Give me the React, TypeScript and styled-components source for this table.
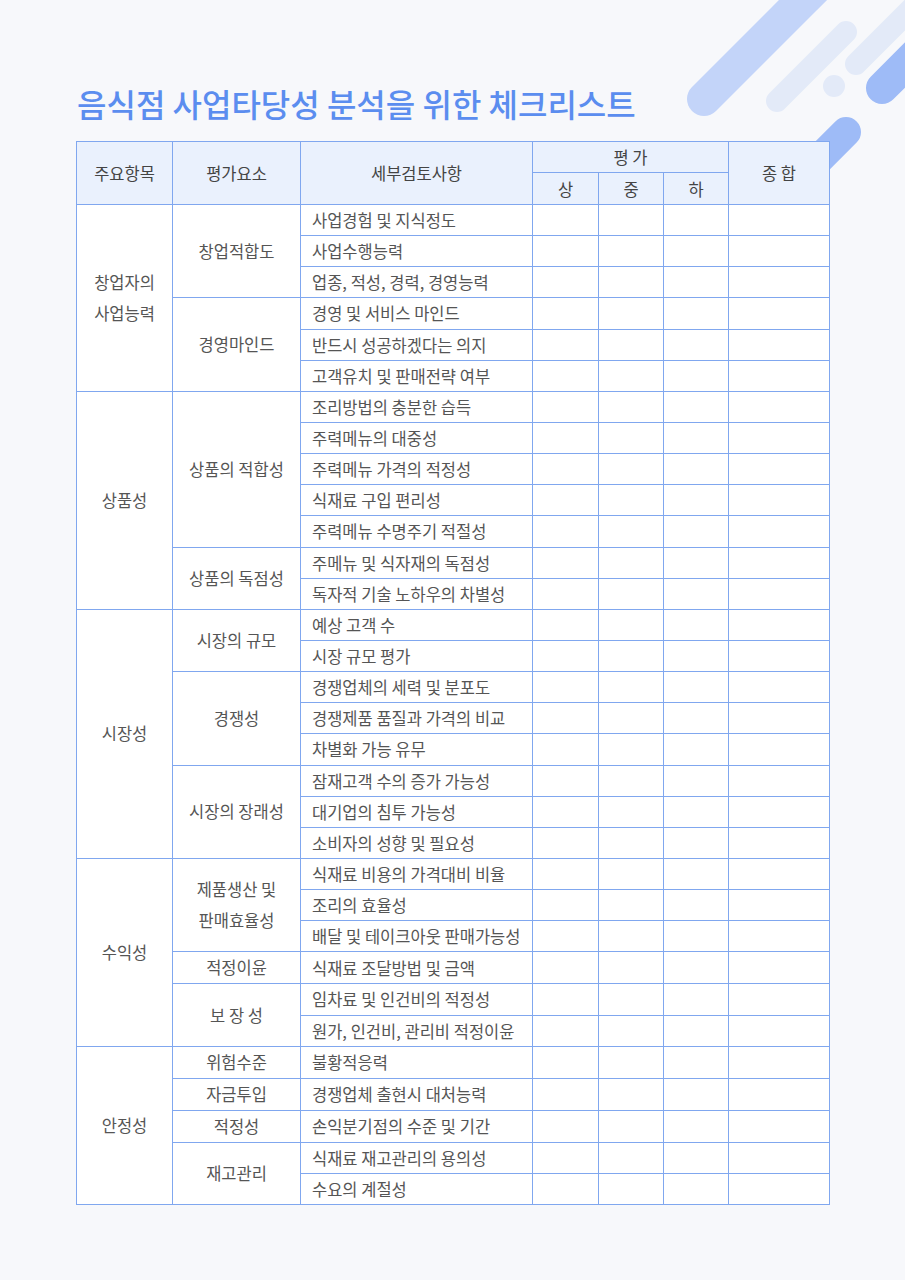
import { FC, Fragment, ReactElement } from "react";
import styled, { createGlobalStyle } from "styled-components";

interface SubGroup {
    label: string[];
    items: string[];
}
interface Group {
    title: string[];
    subs: SubGroup[];
}

const groups: Group[] = [
    {
        title: ["창업자의", "사업능력"],
        subs: [
            { label: ["창업적합도"], items: ["사업경험 및 지식정도", "사업수행능력", "업종, 적성, 경력, 경영능력"] },
            { label: ["경영마인드"], items: ["경영 및 서비스 마인드", "반드시 성공하겠다는 의지", "고객유치 및 판매전략 여부"] },
        ],
    },
    {
        title: ["상품성"],
        subs: [
            {
                label: ["상품의 적합성"],
                items: ["조리방법의 충분한 습득", "주력메뉴의 대중성", "주력메뉴 가격의 적정성", "식재료 구입 편리성", "주력메뉴 수명주기 적절성"],
            },
            { label: ["상품의 독점성"], items: ["주메뉴 및 식자재의 독점성", "독자적 기술 노하우의 차별성"] },
        ],
    },
    {
        title: ["시장성"],
        subs: [
            { label: ["시장의 규모"], items: ["예상 고객 수", "시장 규모 평가"] },
            { label: ["경쟁성"], items: ["경쟁업체의 세력 및 분포도", "경쟁제품 품질과 가격의 비교", "차별화 가능 유무"] },
            { label: ["시장의 장래성"], items: ["잠재고객 수의 증가 가능성", "대기업의 침투 가능성", "소비자의 성향 및 필요성"] },
        ],
    },
    {
        title: ["수익성"],
        subs: [
            {
                label: ["제품생산 및", "판매효율성"],
                items: ["식재료 비용의 가격대비 비율", "조리의 효율성", "배달 및 테이크아웃 판매가능성"],
            },
            { label: ["적정이윤"], items: ["식재료 조달방법 및 금액"] },
            { label: ["보 장 성"], items: ["임차료 및 인건비의 적정성", "원가, 인건비, 관리비 적정이윤"] },
        ],
    },
    {
        title: ["안정성"],
        subs: [
            { label: ["위험수준"], items: ["불황적응력"] },
            { label: ["자금투입"], items: ["경쟁업체 출현시 대처능력"] },
            { label: ["적정성"], items: ["손익분기점의 수준 및 기간"] },
            { label: ["재고관리"], items: ["식재료 재고관리의 용의성", "수요의 계절성"] },
        ],
    },
];

// column widths of the checklist table, left to right
const columns = [96, 128, 232, 66, 65, 65, 101];

const GlobalStyle = createGlobalStyle`
    body {
        margin: 0;
        background: #f7f8fb;
        font-family: "Noto Sans CJK KR", "Noto Sans", sans-serif;
    }
`;

const Page = styled.main`
    position: relative;
    width: 905px;
    height: 1280px;
    overflow: hidden;
    padding: 81px 76px 0;
    box-sizing: border-box;
`;

const Deco = styled.svg`
    position: absolute;
    top: 0;
    left: 640px;
`;

const Title = styled.h1`
    margin: 0 0 16px 1px;
    font-size: 32px;
    line-height: 44px;
    font-weight: 500;
    color: #5b8def;
    letter-spacing: 0;
`;

const Table = styled.table`
    position: relative;
    z-index: 1;
    width: 753px;
    border-collapse: collapse;
    table-layout: fixed;
    background: #fff;
    font-size: 16.5px;
    color: #555;
`;

const Head = styled.th<{ $h: number }>`
    height: ${(p) => p.$h}px;
    padding: 0;
    border: 1px solid #80a7ef;
    background: #eaf1fd;
    font-weight: 400;
    color: #444;
    text-align: center;
    vertical-align: middle;
    line-height: 20px;
`;

const Row = styled.tr`
    height: 31.15px;
`;

const GroupCell = styled.td`
    padding: 0;
    border: 1px solid #80a7ef;
    text-align: center;
    vertical-align: middle;
    line-height: 31px;
`;

const ItemCell = styled.td`
    padding: 0 0 0 11px;
    border: 1px solid #80a7ef;
    white-space: nowrap;
    line-height: 20px;
`;

const ScoreCell = styled.td`
    padding: 0;
    border: 1px solid #80a7ef;
`;

const Decoration: FC = (): ReactElement => (
    <Deco width="265" height="170" viewBox="640 0 265 170">
        <g strokeLinecap="round" fill="none">
            <line x1="704" y1="99" x2="860" y2="-57" stroke="#c3d4f9" strokeWidth="34" />
            <line x1="777" y1="101" x2="846" y2="32" stroke="#e3eaf8" strokeWidth="22" />
            <line x1="856" y1="64" x2="940" y2="-20" stroke="#e3eaf8" strokeWidth="22" />
            <line x1="882" y1="88" x2="960" y2="10" stroke="#9ebbf7" strokeWidth="32" />
            <line x1="846" y1="132" x2="790" y2="188" stroke="#9ebbf7" strokeWidth="30" />
        </g>
        <circle cx="834" cy="86" r="11" fill="#e3eaf8" />
    </Deco>
);

const Lines: FC<{ text: string[] }> = ({ text }): ReactElement => (
    <>
        {text.map((t, i) => (
            <Fragment key={t}>
                {i > 0 && <br />}
                {t}
            </Fragment>
        ))}
    </>
);

const App: FC = (): ReactElement => {
    return (
        <Page>
            <GlobalStyle />
            <Decoration />
            <Title>음식점 사업타당성 분석을 위한 체크리스트</Title>
            <Table>
                <colgroup>
                    {columns.map((w, i) => (
                        <col key={i} style={{ width: w }} />
                    ))}
                </colgroup>
                <thead>
                    <tr>
                        <Head $h={30} rowSpan={2}>주요항목</Head>
                        <Head $h={30} rowSpan={2}>평가요소</Head>
                        <Head $h={30} rowSpan={2}>세부검토사항</Head>
                        <Head $h={30} colSpan={3}>평 가</Head>
                        <Head $h={30} rowSpan={2}>종 합</Head>
                    </tr>
                    <tr>
                        <Head $h={31}>상</Head>
                        <Head $h={31}>중</Head>
                        <Head $h={31}>하</Head>
                    </tr>
                </thead>
                <tbody>
                    {groups.map((g) => {
                        const total = g.subs.reduce((n, s) => n + s.items.length, 0);
                        return g.subs.map((s, si) =>
                            s.items.map((item, ii) => (
                                <Row key={item}>
                                    {si === 0 && ii === 0 && (
                                        <GroupCell rowSpan={total}>
                                            <Lines text={g.title} />
                                        </GroupCell>
                                    )}
                                    {ii === 0 && (
                                        <GroupCell rowSpan={s.items.length}>
                                            <Lines text={s.label} />
                                        </GroupCell>
                                    )}
                                    <ItemCell>{item}</ItemCell>
                                    <ScoreCell />
                                    <ScoreCell />
                                    <ScoreCell />
                                    <ScoreCell />
                                </Row>
                            ))
                        );
                    })}
                </tbody>
            </Table>
        </Page>
    );
};

export default App;
